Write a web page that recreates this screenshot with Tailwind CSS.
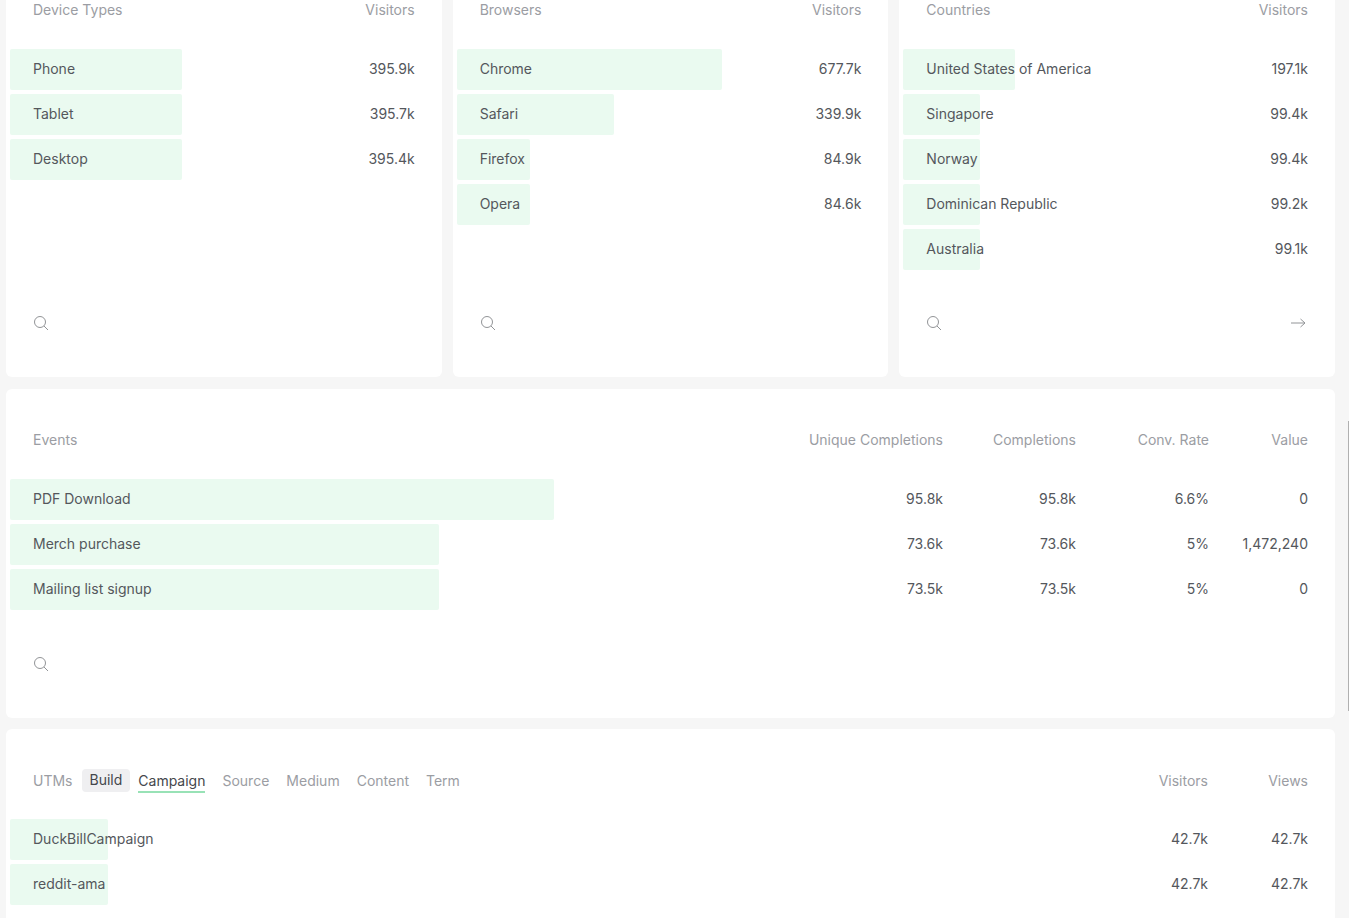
<!DOCTYPE html>
<html lang="en">
<head>
<meta charset="utf-8">
<title>Analytics dashboard</title>
<script src="https://cdn.jsdelivr.net/npm/@tailwindcss/browser@4"></script>
</head>
<body class="relative flex h-screen flex-col overflow-hidden bg-[#f6f6f6] pr-[14px] pl-[6px] font-['Inter',sans-serif] text-sm leading-5 text-[#54575c]">
<svg class="hidden">
  <symbol id="search" viewBox="0 0 16 16"><circle cx="7" cy="7" r="5.5"/><path d="M11 11l4 4"/></symbol>
  <symbol id="arrow" viewBox="0 0 16 16"><path d="M1 8h14M10.5 4l4.500 4-4.500 4"/></symbol>
</svg>

<div class="grid grid-cols-3 gap-[11px]">
  <section class="flex flex-col rounded-b-md bg-white px-1">
    <table class="w-full">
      <thead class="text-[#9b9da3]"><tr><th class="pb-[27px] pl-[23px] text-left font-normal">Device Types</th><th class="pr-[23px] pb-[27px] text-right font-normal">Visitors</th></tr></thead>
      <tbody class="[&_td]:pb-[2px]">
        <tr class="relative isolate h-[45px]"><td class="pl-[23px]"><span class="absolute inset-y-[2px] left-0 -z-10 rounded-xs bg-[#eafaf0]" style="width:40.2%"></span>Phone</td><td class="pr-[23px] text-right">395.9k</td></tr>
        <tr class="relative isolate h-[45px]"><td class="pl-[23px]"><span class="absolute inset-y-[2px] left-0 -z-10 rounded-xs bg-[#eafaf0]" style="width:40.2%"></span>Tablet</td><td class="pr-[23px] text-right">395.7k</td></tr>
        <tr class="relative isolate h-[45px]"><td class="pl-[23px]"><span class="absolute inset-y-[2px] left-0 -z-10 rounded-xs bg-[#eafaf0]" style="width:40.2%"></span>Desktop</td><td class="pr-[23px] text-right">395.4k</td></tr>
      </tbody>
    </table>
    <div class="mt-auto flex justify-between px-[23px] pt-[43px] pb-[46px] text-[#929497]">
      <button type="button" aria-label="Search device types"><svg class="size-4 fill-none stroke-current"><use href="#search"/></svg></button>
    </div>
  </section>

  <section class="flex flex-col rounded-b-md bg-white px-1">
    <table class="w-full">
      <thead class="text-[#9b9da3]"><tr><th class="pb-[27px] pl-[23px] text-left font-normal">Browsers</th><th class="pr-[23px] pb-[27px] text-right font-normal">Visitors</th></tr></thead>
      <tbody class="[&_td]:pb-[2px]">
        <tr class="relative isolate h-[45px]"><td class="pl-[23px]"><span class="absolute inset-y-[2px] left-0 -z-10 rounded-xs bg-[#eafaf0]" style="width:62%"></span>Chrome</td><td class="pr-[23px] text-right">677.7k</td></tr>
        <tr class="relative isolate h-[45px]"><td class="pl-[23px]"><span class="absolute inset-y-[2px] left-0 -z-10 rounded-xs bg-[#eafaf0]" style="width:36.9%"></span>Safari</td><td class="pr-[23px] text-right">339.9k</td></tr>
        <tr class="relative isolate h-[45px]"><td class="pl-[23px]"><span class="absolute inset-y-[2px] left-0 -z-10 rounded-xs bg-[#eafaf0]" style="width:17.2%"></span>Firefox</td><td class="pr-[23px] text-right">84.9k</td></tr>
        <tr class="relative isolate h-[45px]"><td class="pl-[23px]"><span class="absolute inset-y-[2px] left-0 -z-10 rounded-xs bg-[#eafaf0]" style="width:17.2%"></span>Opera</td><td class="pr-[23px] text-right">84.6k</td></tr>
      </tbody>
    </table>
    <div class="mt-auto flex justify-between px-[23px] pt-[43px] pb-[46px] text-[#929497]">
      <button type="button" aria-label="Search browsers"><svg class="size-4 fill-none stroke-current"><use href="#search"/></svg></button>
    </div>
  </section>

  <section class="flex flex-col rounded-b-md bg-white px-1">
    <table class="w-full">
      <thead class="text-[#9b9da3]"><tr><th class="pb-[27px] pl-[23px] text-left font-normal">Countries</th><th class="pr-[23px] pb-[27px] text-right font-normal">Visitors</th></tr></thead>
      <tbody class="[&_td]:pb-[2px]">
        <tr class="relative isolate h-[45px]"><td class="pl-[23px]"><span class="absolute inset-y-[2px] left-0 -z-10 rounded-xs bg-[#eafaf0]" style="width:26.2%"></span>United States of America</td><td class="pr-[23px] text-right">197.1k</td></tr>
        <tr class="relative isolate h-[45px]"><td class="pl-[23px]"><span class="absolute inset-y-[2px] left-0 -z-10 rounded-xs bg-[#eafaf0]" style="width:18%"></span>Singapore</td><td class="pr-[23px] text-right">99.4k</td></tr>
        <tr class="relative isolate h-[45px]"><td class="pl-[23px]"><span class="absolute inset-y-[2px] left-0 -z-10 rounded-xs bg-[#eafaf0]" style="width:18%"></span>Norway</td><td class="pr-[23px] text-right">99.4k</td></tr>
        <tr class="relative isolate h-[45px]"><td class="pl-[23px]"><span class="absolute inset-y-[2px] left-0 -z-10 rounded-xs bg-[#eafaf0]" style="width:18%"></span>Dominican Republic</td><td class="pr-[23px] text-right">99.2k</td></tr>
        <tr class="relative isolate h-[45px]"><td class="pl-[23px]"><span class="absolute inset-y-[2px] left-0 -z-10 rounded-xs bg-[#eafaf0]" style="width:18%"></span>Australia</td><td class="pr-[23px] text-right">99.1k</td></tr>
      </tbody>
    </table>
    <div class="mt-auto flex justify-between pt-[43px] pr-[25px] pb-[46px] pl-[23px] text-[#929497]">
      <button type="button" aria-label="Search countries"><svg class="size-4 fill-none stroke-current"><use href="#search"/></svg></button>
      <button type="button" aria-label="More countries"><svg class="size-4 fill-none stroke-current"><use href="#arrow"/></svg></button>
    </div>
  </section>
</div>

<section class="mt-3 rounded-md bg-white px-1 pt-[41px]">
  <table class="w-full table-fixed">
    <colgroup><col><col class="w-[200px]"><col class="w-[133px]"><col class="w-[133px]"><col class="w-[122px]"></colgroup>
    <thead class="text-[#9b9da3]"><tr><th class="pb-[27px] pl-[23px] text-left font-normal">Events</th><th class="pb-[27px] text-right font-normal">Unique Completions</th><th class="pb-[27px] text-right font-normal">Completions</th><th class="pb-[27px] text-right font-normal">Conv. Rate</th><th class="pr-[23px] pb-[27px] text-right font-normal">Value</th></tr></thead>
    <tbody class="[&_td]:pb-[2px]">
      <tr class="relative isolate h-[45px] text-right"><td class="pl-[23px] text-left"><span class="absolute inset-y-[2px] left-0 -z-10 rounded-xs bg-[#eafaf0]" style="width:41.2%"></span>PDF Download</td><td>95.8k</td><td>95.8k</td><td>6.6%</td><td class="pr-[23px]">0</td></tr>
      <tr class="relative isolate h-[45px] text-right"><td class="pl-[23px] text-left"><span class="absolute inset-y-[2px] left-0 -z-10 rounded-xs bg-[#eafaf0]" style="width:32.5%"></span>Merch purchase</td><td>73.6k</td><td>73.6k</td><td>5%</td><td class="pr-[23px]">1,472,240</td></tr>
      <tr class="relative isolate h-[45px] text-right"><td class="pl-[23px] text-left"><span class="absolute inset-y-[2px] left-0 -z-10 rounded-xs bg-[#eafaf0]" style="width:32.5%"></span>Mailing list signup</td><td>73.5k</td><td>73.5k</td><td>5%</td><td class="pr-[23px]">0</td></tr>
    </tbody>
  </table>
  <div class="flex px-[23px] pt-[44px] pb-[46px] text-[#929497]">
    <button type="button" aria-label="Search events"><svg class="size-4 fill-none stroke-current"><use href="#search"/></svg></button>
  </div>
</section>

<section class="mt-[11px] flex-1 rounded-t-md bg-white px-1 pt-[42px]">
  <table class="w-full table-fixed">
    <colgroup><col><col class="w-[133px]"><col class="w-[123px]"></colgroup>
    <thead class="text-[#9b9da3]"><tr>
      <th class="pb-[26px] pl-[23px] text-left font-normal">
        <div class="flex h-5 items-center">
          <span>UTMs</span>
          <button type="button" class="mr-2 mb-[2px] ml-[9px] h-[23px] rounded-sm bg-[#efeff1] px-2 text-[#44474c]">Build</button>
          <div class="flex gap-[17px]">
            <button type="button" class="-mb-[2px] border-b-2 border-[#98e2b6] text-[#44474c]">Campaign</button>
            <button type="button">Source</button>
            <button type="button">Medium</button>
            <button type="button">Content</button>
            <button type="button">Term</button>
          </div>
        </div>
      </th>
      <th class="pb-[26px] text-right font-normal">Visitors</th><th class="pr-[23px] pb-[26px] text-right font-normal">Views</th></tr></thead>
    <tbody class="[&_td]:pb-[2px]">
      <tr class="relative isolate h-[45px] text-right"><td class="pl-[23px] text-left"><span class="absolute inset-y-[2px] left-0 -z-10 rounded-xs bg-[#eafaf0]" style="width:7.4%"></span>DuckBillCampaign</td><td>42.7k</td><td class="pr-[23px]">42.7k</td></tr>
      <tr class="relative isolate h-[45px] text-right"><td class="pl-[23px] text-left"><span class="absolute inset-y-[2px] left-0 -z-10 rounded-xs bg-[#eafaf0]" style="width:7.4%"></span>reddit-ama</td><td>42.7k</td><td class="pr-[23px]">42.7k</td></tr>
    </tbody>
  </table>
</section>

<!-- Scrollbar thumb -->
<div class="absolute top-[421px] right-0 h-[290px] w-px bg-[#b0b0b0]"></div>
</body>
</html>
